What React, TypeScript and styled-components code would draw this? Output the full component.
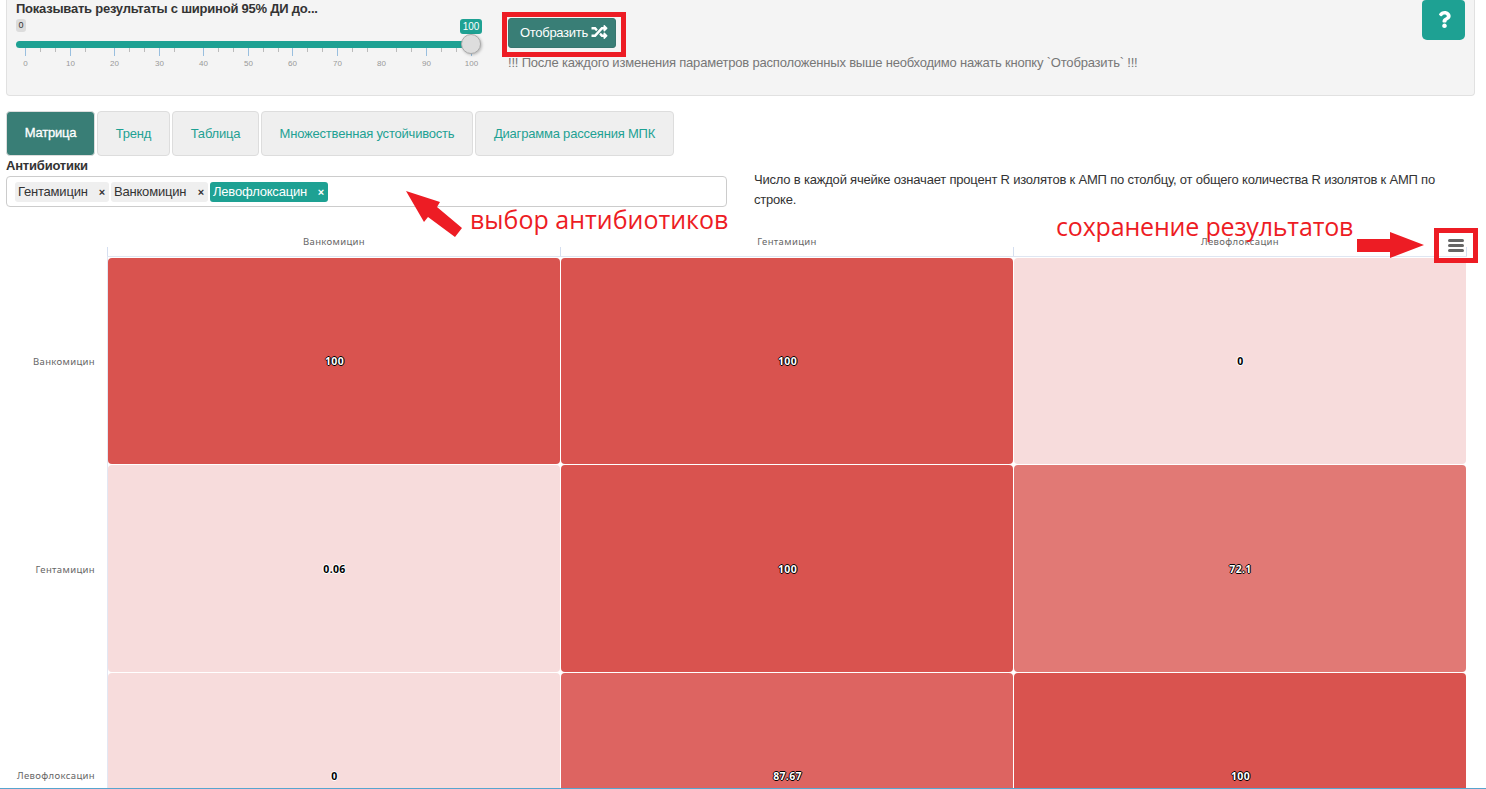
import React from 'react';
import styled, { createGlobalStyle } from 'styled-components';
import { FaQuestion, FaRandom } from 'react-icons/fa';

const GlobalStyle = createGlobalStyle`
  * { box-sizing: border-box; }
  body { margin: 0; background: #fff; }
`;

const Page = styled.div`
  position: relative;
  display: flex;
  flex-direction: column;
  width: 1486px;
  height: 789px;
  overflow: hidden;
  border-bottom: 1px solid #57a5cf;
  font-family: 'Liberation Sans', Arial, sans-serif;
  font-size: 13px;
  letter-spacing: -0.2px;
  color: #333;
`;

const Panel = styled.section`
  display: flex;
  flex: none;
  height: 96px;
  margin: 0 11px 0 6px;
  padding: 0 9px;
  background: #f4f4f4;
  border: 1px solid #e1e1e1;
  border-top: 0;
  border-radius: 0 0 4px 4px;
`;

const SliderBlock = styled.div`
  width: 466px;
  flex: none;
`;

const SliderTitle = styled.div`
  height: 18px;
  line-height: 17px;
  font-weight: bold;
  letter-spacing: -0.23px;
  white-space: nowrap;
`;

const BubbleRow = styled.div`
  display: flex;
  justify-content: space-between;
  height: 23px;
  letter-spacing: 0;
`;

const MinBubble = styled.span`
  width: 10px;
  height: 13px;
  margin-top: 1px;
  border-radius: 3px;
  background: #dcdcdc;
  font-size: 9px;
  line-height: 12px;
  text-align: center;
`;

const MaxBubble = styled.span`
  width: 22px;
  height: 15px;
  margin-top: 1px;
  border-radius: 3px;
  background: #1ea193;
  color: #fff;
  font-size: 10px;
  line-height: 15px;
  text-align: center;
`;

const Track = styled.div`
  position: relative;
  width: 455px;
  height: 7px;
  border-radius: 4px 0 0 4px;
  background: #1ea193;
`;

const Handle = styled.span`
  position: absolute;
  right: -10px;
  top: -7px;
  width: 20px;
  height: 20px;
  border: 1px solid #aaa;
  border-radius: 50%;
  background: #ddd;
  box-shadow: 1px 1px 3px rgba(0, 0, 0, 0.25);
`;

const Scale = styled.svg`
  display: block;
  width: 466px;
  height: 24px;
  letter-spacing: 0;
  text {
    font: 8px 'Liberation Sans', Arial, sans-serif;
    fill: #999;
    text-anchor: middle;
  }
`;

const Actions = styled.div`
  flex: 1;
  padding: 18px 0 0 26px;
`;

const ShowButton = styled.button`
  display: flex;
  align-items: center;
  gap: 3px;
  width: 108px;
  height: 30px;
  padding: 0 0 2px 11px;
  border: 1px solid #37766f;
  border-radius: 3px;
  background: #397e76;
  color: #fff;
  font: 13px 'Liberation Sans', Arial, sans-serif;
  letter-spacing: -0.3px;
  svg { width: 17px; height: 16px; }
`;

const Hint = styled.div`
  margin-top: 7px;
  line-height: 16px;
  color: #777;
  white-space: nowrap;
`;

const HelpButton = styled.button`
  display: flex;
  align-items: center;
  justify-content: center;
  width: 43px;
  height: 40px;
  padding: 0 0 2px 1px;
  border: 0;
  border-radius: 4px 4px 5px 5px;
  background: #1ea193;
  color: #fff;
  svg { width: 13px; height: 17px; }
`;

const Tabs = styled.nav`
  display: flex;
  flex: none;
  gap: 2px;
  height: 45px;
  margin: 15px 0 0 6px;
`;

const Tab = styled.button<{ $w: number; $active?: boolean }>`
  width: ${p => p.$w}px;
  height: 45px;
  padding: ${p => (p.$active ? '0 0 2px' : '0')};
  border: 1px solid #ddd;
  border-radius: 4px;
  background: ${p => (p.$active ? '#397e76' : '#efefef')};
  color: ${p => (p.$active ? '#fff' : '#1ea193')};
  font: 13px 'Liberation Sans', Arial, sans-serif;
  letter-spacing: -0.2px;
  -webkit-text-stroke: ${p => (p.$active ? '0.3px #fff' : '0')};
  white-space: nowrap;
`;

const Filters = styled.section`
  display: flex;
  flex: none;
  height: 79px;
  padding-left: 6px;
`;

const SelectBlock = styled.div`
  width: 721px;
`;

const SelectLabel = styled.div`
  height: 20px;
  line-height: 20px;
  font-weight: bold;
`;

const MultiSelect = styled.div`
  display: flex;
  gap: 2px;
  height: 31px;
  padding: 5px 8px;
  border: 1px solid #ccc;
  border-radius: 4px;
`;

const Chip = styled.span<{ $w: number; $active?: boolean }>`
  display: flex;
  justify-content: space-between;
  align-items: center;
  width: ${p => p.$w}px;
  height: 20px;
  padding: 0 4px 1px 3px;
  border-radius: 3px;
  background: ${p => (p.$active ? '#1ea193' : '#efefef')};
  color: ${p => (p.$active ? '#fff' : '#333')};
  b { font-size: 11px; }
`;

const Description = styled.p`
  margin: 14px 0 0 27px;
  width: 700px;
  line-height: 20px;
`;

const Chart = styled.section`
  display: flex;
  flex: none;
  font-family: 'Noto Sans', sans-serif;
  font-size: 9.5px;
  letter-spacing: 0.35px;
  color: #666;
`;

const RowLabels = styled.div`
  display: grid;
  grid-template-rows: 206px 208px 203px;
  row-gap: 1px;
  width: 107px;
  padding: 23px 12px 0 0;
  justify-items: end;
  align-items: center;
`;

const Plot = styled.div`
  width: 1360px;
`;

const ColumnLabels = styled.div`
  display: grid;
  grid-template-columns: repeat(3, 453px);
  height: 22px;
  border-bottom: 1px solid #dfe6f2;
  background: linear-gradient(#d5dff0, #d5dff0) right bottom / 1px 9px no-repeat;
`;

const ColumnLabel = styled.div`
  display: flex;
  justify-content: center;
  padding-left: 1px;
  line-height: 14px;
  background: linear-gradient(#d5dff0, #d5dff0) left bottom / 1px 9px no-repeat;
`;

const Cells = styled.div`
  display: grid;
  grid-template-columns: repeat(3, 452px);
  grid-template-rows: 206px 207px 207px;
  gap: 1px;
  padding-top: 1px;
  border-left: 1px solid #e3e7f3;
`;

const Cell = styled.div<{ $bg: string; $dark?: boolean }>`
  display: flex;
  align-items: center;
  justify-content: center;
  padding-left: 1px;
  border-radius: 4px;
  background: ${p => p.$bg};
  color: ${p => (p.$dark ? '#000' : '#fff')};
  font-size: 10.5px;
  line-height: 14px;
  font-weight: bold;
  text-shadow: ${p => {
    const c = p.$dark ? '#fff' : '#000';
    return `-1px 0 ${c}, 1px 0 ${c}, 0 -1px ${c}, 0 1px ${c}`;
  }};
  &:nth-child(n + 7) { padding-bottom: 2px; }
`;

const Frame = styled.div<{ $x: number; $y: number; $w: number; $h: number }>`
  position: absolute;
  left: ${p => p.$x}px;
  top: ${p => p.$y}px;
  width: ${p => p.$w}px;
  height: ${p => p.$h}px;
  border: 5px solid #ed1c24;
`;

const Note = styled.div<{ $x: number; $y: number; $spacing: number }>`
  position: absolute;
  left: ${p => p.$x}px;
  top: ${p => p.$y}px;
  font: 25px/34px 'Open Sans', sans-serif;
  letter-spacing: ${p => p.$spacing}px;
  color: #ed1c24;
  white-space: nowrap;
`;

const Arrows = styled.svg`
  position: absolute;
  inset: 0;
  pointer-events: none;
`;

const MenuButton = styled.button`
  position: absolute;
  left: 1447px;
  top: 236px;
  width: 18px;
  height: 18px;
  display: flex;
  flex-direction: column;
  justify-content: center;
  align-items: center;
  gap: 2px;
  padding: 0;
  border: 0;
  background: #fff;
  i { width: 16px; height: 3px; border-radius: 1.5px; background: #666; }
`;

const drugs = ['Ванкомицин', 'Гентамицин', 'Левофлоксацин'];
const values: { v: string; bg: string; dark?: boolean }[] = [
  { v: '100', bg: '#d9534f' },
  { v: '100', bg: '#d9534f' },
  { v: '0', bg: '#f7dcdc', dark: true },
  { v: '0.06', bg: '#f7dcdc', dark: true },
  { v: '100', bg: '#d9534f' },
  { v: '72.1', bg: '#e17975' },
  { v: '0', bg: '#f7dcdc', dark: true },
  { v: '87.67', bg: '#dd6461' },
  { v: '100', bg: '#d9534f' },
];
const labels = [9, 54, 98, 143, 187, 232, 276, 321, 365, 410, 455];
const majors = labels.filter(x => x !== 365);
const minors = [24, 39, 69, 113, 128, 158, 202, 217, 247, 262, 291, 306, 336, 351, 380, 395, 425, 440];

export default function App() {
  return (
    <Page>
      <GlobalStyle />
      <Panel>
        <SliderBlock>
          <SliderTitle>Показывать результаты с шириной 95% ДИ до...</SliderTitle>
          <BubbleRow>
            <MinBubble>0</MinBubble>
            <MaxBubble>100</MaxBubble>
          </BubbleRow>
          <Track><Handle /></Track>
          <Scale>
            {majors.map(x => <rect key={x} x={x} y={0} width={1} height={8} fill="#99bfdf" />)}
            {minors.map(x => <rect key={x} x={x} y={0} width={1} height={4} fill="#bbb" />)}
            {labels.map((x, i) => <text key={i} x={x + 0.5} y={18}>{i * 10}</text>)}
          </Scale>
        </SliderBlock>
        <Actions>
          <ShowButton>Отобразить <FaRandom /></ShowButton>
          <Hint>!!! После каждого изменения параметров расположенных выше необходимо нажать кнопку `Отобразить` !!!</Hint>
        </Actions>
        <HelpButton aria-label="help"><FaQuestion /></HelpButton>
      </Panel>
      <Tabs>
        <Tab $w={89} $active>Матрица</Tab>
        <Tab $w={73}>Тренд</Tab>
        <Tab $w={87}>Таблица</Tab>
        <Tab $w={212}>Множественная устойчивость</Tab>
        <Tab $w={199}>Диаграмма рассеяния МПК</Tab>
      </Tabs>
      <Filters>
        <SelectBlock>
          <SelectLabel>Антибиотики</SelectLabel>
          <MultiSelect>
            <Chip $w={94}>Гентамицин<b>×</b></Chip>
            <Chip $w={97}>Ванкомицин<b>×</b></Chip>
            <Chip $w={118} $active>Левофлоксацин<b>×</b></Chip>
          </MultiSelect>
        </SelectBlock>
        <Description>
          Число в каждой ячейке означает процент R изолятов к АМП по столбцу, от общего количества R изолятов к АМП по строке.
        </Description>
      </Filters>
      <Chart>
        <RowLabels>{drugs.map(d => <span key={d}>{d}</span>)}</RowLabels>
        <Plot>
          <ColumnLabels>{drugs.map(d => <ColumnLabel key={d}>{d}</ColumnLabel>)}</ColumnLabels>
          <Cells>
            {values.map((c, i) => <Cell key={i} $bg={c.bg} $dark={c.dark}>{c.v}</Cell>)}
          </Cells>
        </Plot>
      </Chart>
      <MenuButton aria-label="menu"><i /><i /><i /></MenuButton>
      <Frame $x={502} $y={12} $w={124} $h={45} />
      <Frame $x={1434} $y={228} $w={44} $h={35} />
      <Note $x={470} $y={202} $spacing={0}>выбор антибиотиков</Note>
      <Note $x={1056} $y={209} $spacing={-0.18}>сохранение результатов</Note>
      <Arrows width={1486} height={789}>
        <path d="M406 191L440 202L437 207L462 228L455 237L428 217L424 222Z" fill="#ed1c24" />
        <path d="M1357 239H1390V232L1424 245L1390 258V252H1357Z" fill="#ed1c24" />
      </Arrows>
    </Page>
  );
}
